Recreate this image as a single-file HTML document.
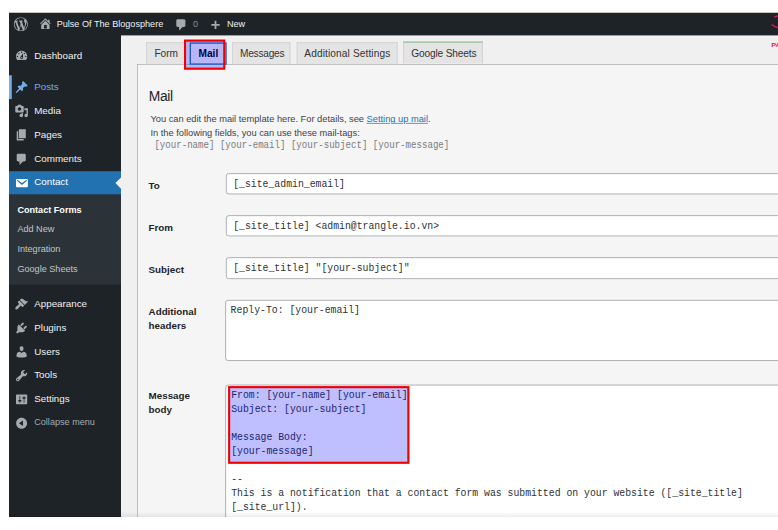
<!DOCTYPE html>
<html><head><meta charset="utf-8">
<style>
html,body{margin:0;padding:0;background:#fff;}
body{width:778px;height:530px;overflow:hidden;position:relative;font-family:"Liberation Sans",sans-serif;}
#shot{position:absolute;left:9px;top:12.6px;width:1099px;height:720px;transform:scale(0.7);transform-origin:0 0;background:linear-gradient(to right,#1d2327 160px,#f0f0f1 160px);overflow:hidden;}
.a{position:absolute;white-space:pre;line-height:1;}
.mono{font-family:"Liberation Mono",monospace;}
#ab{position:absolute;left:0;top:0;width:1099px;height:32px;background:#1d2327;}
#menu{position:absolute;left:0;top:32px;width:160px;height:688px;}
.mi{position:absolute;left:0;width:160px;height:34px;}
.mt{position:absolute;left:36px;top:8.6px;font-size:14px;line-height:1;color:#f0f0f1;white-space:pre;}
.ic{position:absolute;left:8px;top:7px;width:20px;height:20px;}
.st{position:absolute;left:12px;margin-top:4.3px;font-size:13px;line-height:1;color:#c3c4c7;white-space:pre;}
.tab{position:absolute;top:42px;height:30px;background:#e4e4e4;border:1px solid #ccc;border-bottom:none;box-sizing:content-box;}
.tt{position:absolute;font-size:14.5px;line-height:1;color:#333;white-space:pre;}
.lbl{position:absolute;left:199.4px;font-size:14px;font-weight:bold;line-height:1;color:#1d2327;white-space:pre;}
.inp{position:absolute;left:310px;width:900px;background:#fff;border:1px solid #8c8f94;border-radius:4px;box-sizing:border-box;}
.it{position:absolute;font-family:"Liberation Mono",monospace;font-size:14px;line-height:1;color:#2c3338;white-space:pre;transform:scaleY(1.15);transform-origin:0 10.57px;}
</style></head>
<body>
<div id="shot">
  <!-- admin bar -->
  <div id="ab"></div><div id="abc" style="position:absolute;left:0;top:0;width:1099px;height:32px">
    <svg style="position:absolute;left:7px;top:5.5px" width="20" height="20" viewBox="0 0 20 20"><path fill="#a7aaad" d="M20 10c0-5.51-4.49-10-10-10C4.48 0 0 4.49 0 10c0 5.52 4.48 10 10 10 5.51 0 10-4.48 10-10zM7.78 15.37L4.37 6.22c.55-.02 1.17-.08 1.17-.08.5-.06.44-1.13-.06-1.11 0 0-1.45.11-2.37.11-.18 0-.37 0-.58-.01C4.12 2.69 6.87 1.11 10 1.11c2.33 0 4.45.87 6.05 2.34-.68-.11-1.65.39-1.65 1.58 0 .74.45 1.36.9 2.1.35.61.55 1.36.55 2.46 0 1.49-1.4 5-1.4 5l-3.03-8.37c.54-.02.82-.17.82-.17.5-.05.44-1.25-.06-1.22 0 0-1.44.12-2.38.12-.87 0-2.33-.12-2.33-.12-.5-.03-.56 1.2-.06 1.22l.92.08 1.26 3.41zM17.41 10c.24-.64.74-1.87.43-4.25.7 1.29 1.05 2.71 1.05 4.25 0 3.29-1.73 6.24-4.4 7.78.97-2.59 1.94-5.2 2.92-7.78zM6.1 18.09C3.12 16.65 1.11 13.53 1.11 10c0-1.3.23-2.48.72-3.59C3.25 10.3 4.67 14.2 6.1 18.09zm4.03-6.63l2.58 6.98c-.86.29-1.76.45-2.71.45-.79 0-1.57-.11-2.29-.33.81-2.38 1.62-4.74 2.42-7.1z"/></svg>
    <svg style="position:absolute;left:42.1px;top:5.2px" width="20" height="20" viewBox="0 0 20 20"><path fill="#a7aaad" d="M16 8.5l1.53 1.53-1.06 1.06L10 4.62l-6.47 6.47-1.06-1.06L10 2.5l4 4v-2h2v4zm-6-2.46l6 5.99V18H4v-5.97zM12 17v-5H8v5h4z"/></svg>
    <div class="a" style="left:68.1px;top:9px;font-size:13px;color:#f0f0f1">Pulse Of The Blogosphere</div>
    <svg style="position:absolute;left:236.4px;top:6.6px" width="20" height="20" viewBox="0 0 20 20"><path fill="#a7aaad" d="M5 2h9c1.1 0 2 .9 2 2v7c0 1.1-.9 2-2 2h-2l-5 5v-5H5c-1.1 0-2-.9-2-2V4c0-1.1.9-2 2-2z"/></svg>
    <div class="a" style="left:262.7px;top:9px;font-size:13px;color:#8c8f94">0</div>
    <svg style="position:absolute;left:288.4px;top:9.5px" width="14" height="14" viewBox="0 0 14 14">
      <path d="M7 1 V13 M1 7 H13" stroke="#a7aaad" stroke-width="2.6"/>
    </svg>
    <div class="a" style="left:311.4px;top:9px;font-size:13px;color:#f0f0f1">New</div>
    <svg style="position:absolute;left:1080px;top:0px" width="19" height="32" viewBox="1080 0 19 32">
      <path d="M1093.3 5.8 Q1096 4.4 1100 4" fill="none" stroke="#cc1a5c" stroke-width="2"/>
      <path d="M1089.6 16.4 Q1093.5 20 1100 21" fill="none" stroke="#cc1a5c" stroke-width="2.3"/>
    </svg>
  </div>

  <!-- admin menu -->
  <div id="menu">
    <!-- Dashboard 44 -->
    <div class="mi" style="top:12px">
      <svg class="ic" viewBox="0 0 20 20"><path fill="#a7aaad" d="M3.76 16h12.48c1.1-1.37 1.76-3.11 1.76-5 0-4.42-3.58-8-8-8s-8 3.58-8 8c0 1.89.66 3.63 1.76 5zM10 4c.55 0 1 .45 1 1s-.45 1-1 1-1-.45-1-1 .45-1 1-1zM6 6c.55 0 1 .45 1 1s-.45 1-1 1-1-.45-1-1 .45-1 1-1zm8 0c.55 0 1 .45 1 1s-.45 1-1 1-1-.45-1-1 .45-1 1-1zm-5.37 5.55L12 7v6c0 1.1-.9 2-2 2s-2-.9-2-2c0-.57.24-1.08.63-1.45zM4 10c.55 0 1 .45 1 1s-.45 1-1 1-1-.45-1-1 .45-1 1-1zm12 0c.55 0 1 .45 1 1s-.45 1-1 1-1-.45-1-1 .45-1 1-1zm-5 3c0-.55-.45-1-1-1s-1 .45-1 1 .45 1 1 1 1-.45 1-1z"/></svg>
      <div class="mt">Dashboard</div>
    </div>
    <!-- Posts 89 -->
    <div class="mi" style="top:57px">
      <div style="position:absolute;left:0;top:0;width:4px;height:34px;background:#72aee6"></div>
      <svg class="ic" viewBox="0 0 20 20"><path fill="#72aee6" d="M10.44 3.02l1.82-1.82 6.36 6.35-1.83 1.82c-1.05-.68-2.48-.57-3.41.36l-.75.75c-.92.93-1.04 2.35-.35 3.41l-1.83 1.82-2.41-2.41-2.8 2.79c-.42.42-3.38 2.71-3.8 2.29s1.86-3.39 2.28-3.81l2.79-2.79L4.1 9.36l1.83-1.82c1.05.69 2.48.57 3.4-.36l.75-.75c.93-.92 1.05-2.35.36-3.41z"/></svg>
      <div class="mt" style="color:#72aee6">Posts</div>
    </div>
    <!-- Media 123 -->
    <div class="mi" style="top:91px">
      <svg class="ic" viewBox="0 0 20 20"><path fill="#a7aaad" d="M13 11V4c0-.55-.45-1-1-1h-1.67L9 1H5L3.67 3H2c-.55 0-1 .45-1 1v7c0 .55.45 1 1 1h10c.55 0 1-.45 1-1zM7 4.5c1.38 0 2.5 1.12 2.5 2.5S8.38 9.5 7 9.5 4.5 8.38 4.5 7 5.62 4.5 7 4.5zM14 6h5v10.5c0 1.38-1.12 2.5-2.5 2.5S14 17.88 14 16.5s1.12-2.5 2.5-2.5c.17 0 .34.02.5.05V9h-3V6zm-4 8.05V13h2v3.5c0 1.38-1.12 2.5-2.5 2.5S7 17.88 7 16.5 8.12 14 9.5 14c.17 0 .34.02.5.05z"/></svg>
      <div class="mt">Media</div>
    </div>
    <!-- Pages 157 -->
    <div class="mi" style="top:125px">
      <svg class="ic" viewBox="0 0 20 20"><path fill="#a7aaad" d="M6 15V2h10v13H6zm-1 1h8v2H3V5h2v11z"/></svg>
      <div class="mt">Pages</div>
    </div>
    <!-- Comments 191 -->
    <div class="mi" style="top:160.2px">
      <svg class="ic" viewBox="0 0 20 20"><path fill="#a7aaad" d="M5 2h9c1.1 0 2 .9 2 2v7c0 1.1-.9 2-2 2h-2l-5 5v-5H5c-1.1 0-2-.9-2-2V4c0-1.1.9-2 2-2z"/></svg>
      <div class="mt">Comments</div>
    </div>
    <!-- Contact 225 -->
    <div class="mi" style="top:194px;background:#2271b1">
      <svg class="ic" viewBox="0 0 20 20"><path fill="#fff" d="M3.87 4h13.25C18.37 4 19 4.59 19 5.79v8.42c0 1.19-.63 1.79-1.88 1.79H3.87c-1.25 0-1.88-.6-1.88-1.79V5.79c0-1.2.63-1.79 1.88-1.79zm6.62 8.6l6.74-5.53c.24-.2.43-.66.13-1.07-.29-.41-.82-.42-1.17-.17l-5.7 3.86L4.8 5.83c-.35-.25-.88-.24-1.17.17-.3.41-.11.87.13 1.07z"/></svg>
      <div class="mt" style="color:#fff;top:8.2px">Contact</div>
      <div style="position:absolute;right:0;top:9px;width:0;height:0;border:8px solid transparent;border-right-color:#f0f0f1;border-left:none"></div>
    </div>
    <!-- submenu 259-388 -->
    <div style="position:absolute;left:0;top:227px;width:160px;height:129px;background:#2c3338">
      <div class="st" style="top:11.5px;color:#fff;font-weight:bold">Contact Forms</div>
      <div class="st" style="top:39px">Add New</div>
      <div class="st" style="top:67px">Integration</div>
      <div class="st" style="top:96px">Google Sheets</div>
    </div>
    <!-- Appearance 399 -->
    <div class="mi" style="top:367px">
      <svg class="ic" viewBox="0 0 20 20"><path fill="#a7aaad" d="M14.48 11.06L7.41 3.99l1.5-1.5c.5-.56 2.3-.47 3.51.32 1.21.8 1.43 1.28 2.91 2.1 1.18.64 2.45 1.26 4.45.85zm-.71.71L6.7 4.7 4.93 6.47c-.39.39-.39 1.02 0 1.41l1.06 1.06c.39.39.39 1.03 0 1.42-.6.6-1.43 1.11-2.21 1.69-.35.26-.7.53-1.01.84C1.43 14.23.4 16.08 1.4 17.07c.99 1 2.84-.03 4.18-1.36.31-.31.58-.66.85-1.02.57-.78 1.08-1.61 1.69-2.21.39-.39 1.02-.39 1.41 0l1.06 1.06c.39.39 1.02.39 1.41 0z"/></svg>
      <div class="mt">Appearance</div>
    </div>
    <!-- Plugins 433 -->
    <div class="mi" style="top:401px">
      <svg class="ic" viewBox="0 0 20 20"><path fill="#a7aaad" d="M13.11 4.36L9.87 7.6 8 5.73l3.24-3.24c.35-.34 1.05-.2 1.56.32.52.51.66 1.21.31 1.55zm-8 1.77l.91-1.12 9.01 9.01-1.19.84c-.71.71-2.63 1.16-3.82 1.16H6.14L4.9 17.26c-.59.59-1.54.59-2.12 0-.59-.58-.59-1.53 0-2.12l1.24-1.24v-3.88c0-1.13.4-3.19 1.09-3.89zm7.26 3.97l3.24-3.24c.34-.35 1.04-.21 1.55.31.52.51.66 1.21.31 1.55l-3.24 3.25z"/></svg>
      <div class="mt">Plugins</div>
    </div>
    <!-- Users 467 -->
    <div class="mi" style="top:435px">
      <svg class="ic" viewBox="0 0 20 20"><path fill="#a7aaad" d="M10 9.25c-2.27 0-2.73-3.44-2.73-3.44C7 4.02 7.82 2 9.97 2c2.16 0 2.98 2.02 2.71 3.81 0 0-.41 3.44-2.68 3.44zm0 2.57L12.72 10c2.39 0 4.52 2.33 4.52 4.53v2.49s-3.65 1.13-7.24 1.13c-3.65 0-7.24-1.13-7.240-1.13v-2.49c0-2.25 1.94-4.48 4.47-4.48z"/></svg>
      <div class="mt">Users</div>
    </div>
    <!-- Tools 501 -->
    <div class="mi" style="top:469px">
      <svg class="ic" viewBox="0 0 20 20"><path fill="#a7aaad" d="M16.68 9.77c-1.34 1.34-3.3 1.67-4.95.99l-5.41 6.52c-.99.99-2.59.99-3.58 0s-.99-2.59 0-3.57l6.52-5.42c-.68-1.65-.35-3.61.99-4.95 1.28-1.28 3.12-1.62 4.72-1.06l-2.89 2.89 2.82 2.82 2.86-2.87c.53 1.58.18 3.39-1.08 4.65zM3.81 16.21c.4.39 1.04.39 1.43 0 .4-.4.4-1.04 0-1.43-.39-.4-1.03-.4-1.43 0-.39.39-.39 1.03 0 1.43z"/></svg>
      <div class="mt">Tools</div>
    </div>
    <!-- Settings 535 -->
    <div class="mi" style="top:503px">
      <svg class="ic" viewBox="0 0 20 20"><path fill="#a7aaad" d="M18 16V4c0-.55-.45-1-1-1H3c-.55 0-1 .45-1 1v12c0 .55.45 1 1 1h14c.55 0 1-.45 1-1zM8 11h1c.55 0 1 .45 1 1s-.45 1-1 1H8v1.5c0 .28-.22.5-.5.5s-.5-.22-.5-.5V13H6c-.55 0-1-.45-1-1s.45-1 1-1h1V5.5c0-.28.22-.5.5-.5s.5.22.5.5V11zm5-2h-1c-.55 0-1-.45-1-1s.45-1 1-1h1V5.5c0-.28.22-.5.5-.5s.5.22.5.5V7h1c.55 0 1 .45 1 1s-.45 1-1 1h-1v5.5c0 .28-.22.5-.5.5s-.5-.22-.5-.5V9z"/></svg>
      <div class="mt">Settings</div>
    </div>
    <!-- Collapse 569 -->
    <div class="mi" style="top:537px">
      <svg class="ic" viewBox="0 0 20 20"><path fill="#a7aaad" d="M10 2.16c4.33 0 7.84 3.51 7.84 7.84S14.33 17.84 10 17.84 2.16 14.33 2.16 10 5.67 2.16 10 2.16zm2 11.72V6.12L6.18 9.97z"/></svg>
      <div class="mt" style="font-size:13px;top:9.2px;color:#a7aaad">Collapse menu</div>
    </div>
  </div>

  <!-- content -->
  <!-- panel -->
  <div style="position:absolute;left:183px;top:73px;width:1000px;height:700px;background:#f5f5f5;border:1px solid #aaa;box-sizing:border-box"></div>
  <div class="a" style="left:1088.8px;top:42.6px;font-size:8px;font-weight:bold;color:#d81b60;transform:scaleX(1.3);transform-origin:0 0">PA</div>
  <!-- tabs -->
  <div class="tab" style="left:196px;width:53px"></div>
  <div class="tt" style="left:207.7px;top:51px">Form</div>
  <div class="tab" style="left:318.9px;width:81.5px"></div>
  <div class="tt" style="left:330px;top:51px;letter-spacing:-0.35px">Messages</div>
  <div class="tab" style="left:410.6px;width:142.4px"></div>
  <div class="tt" style="left:421.9px;top:51px;letter-spacing:0.15px">Additional Settings</div>
  <div class="tab" style="left:563px;width:112px;top:41px;height:30.3px;border-top:1.7px solid #3fa64f"></div>
  <div class="tt" style="left:574.6px;top:51px;letter-spacing:-0.22px">Google Sheets</div>
  <!-- Mail tab highlight -->
  <div style="position:absolute;left:258.4px;top:42.4px;width:52.9px;height:32px;background:#f5f5f5"></div>
  <div class="tt" style="left:270.7px;top:51px;font-weight:bold;color:#000">Mail</div>
  <div style="position:absolute;left:250.1px;top:37.9px;width:59.2px;height:43.2px;background:rgba(0,0,255,0.25)"></div>
  <div style="position:absolute;left:258.4px;top:42.4px;width:52.9px;height:32px;border:2px solid #2159c2;box-sizing:border-box"></div>
  <div style="position:absolute;left:250.1px;top:37.9px;width:59.2px;height:43.2px;border:3.5px solid #f20000;box-sizing:border-box"></div>

  <div class="a" style="left:199.7px;top:110.1px;font-size:19.8px;letter-spacing:-0.55px;color:#1d2327">Mail</div>
  <div class="a" style="left:202px;top:145.1px;font-size:13.25px;color:#3c434a">You can edit the mail template here. For details, see <span style="color:#2271b1;text-decoration:underline">Setting up mail</span>.</div>
  <div class="a" style="left:202px;top:164.8px;font-size:13.25px;color:#3c434a">In the following fields, you can use these mail-tags:</div>
  <div class="a mono" style="left:207.7px;top:183.4px;font-size:13px;color:#787c82;transform:scaleY(1.15);transform-origin:0 9.8px">[your-name] [your-email] [your-subject] [your-message]</div>

  <!-- fields -->
  <div class="lbl" style="top:239.9px">To</div>
  <div class="inp" style="top:229.2px;height:29.5px"></div>
  <div class="it" style="left:320.3px;top:238.3px">[_site_admin_email]</div>

  <div class="lbl" style="top:300.2px">From</div>
  <div class="inp" style="top:289.2px;height:29.8px"></div>
  <div class="it" style="left:320.3px;top:298.4px">[_site_title] &lt;admin@trangle.io.vn&gt;</div>

  <div class="lbl" style="top:360.2px">Subject</div>
  <div class="inp" style="top:349.2px;height:30.6px"></div>
  <div class="it" style="left:320.3px;top:358.4px">[_site_title] "[your-subject]"</div>

  <div class="lbl" style="top:419.2px">Additional</div>
  <div class="lbl" style="top:439.2px">headers</div>
  <div class="inp" style="top:410.4px;height:86.3px;left:309.2px"></div>
  <div class="it" style="left:316.6px;top:418.4px">Reply-To: [your-email]</div>

  <div class="lbl" style="top:540.2px">Message</div>
  <div class="lbl" style="top:560.2px">body</div>
  <div class="inp" style="top:531px;height:300px;left:309.2px"></div>
  <div class="it" style="left:317.4px;line-height:17.39px;top:537.6px;color:#2c3338;transform-origin:0 12.43px">From: [your-name] [your-email]
Subject: [your-subject]

Message Body:
[your-message]

--
This is a notification that a contact form was submitted on your website ([_site_title]
[_site_url]).</div>
  <div style="position:absolute;left:313px;top:533.4px;width:258.9px;height:111px;background:rgba(0,0,255,0.25)"></div>
  <div style="position:absolute;left:313px;top:533.4px;width:258.9px;height:111px;border:3.5px solid #f20000;box-sizing:border-box"></div>
</div>
<div style="position:absolute;left:9px;top:12px;width:769px;height:1px;background:#c9c1b6"></div>
<div style="position:absolute;left:9px;top:511.5px;width:769px;height:5.1px;background:linear-gradient(to bottom,rgba(0,0,0,0),rgba(0,0,0,0.075))"></div>
</body></html>
